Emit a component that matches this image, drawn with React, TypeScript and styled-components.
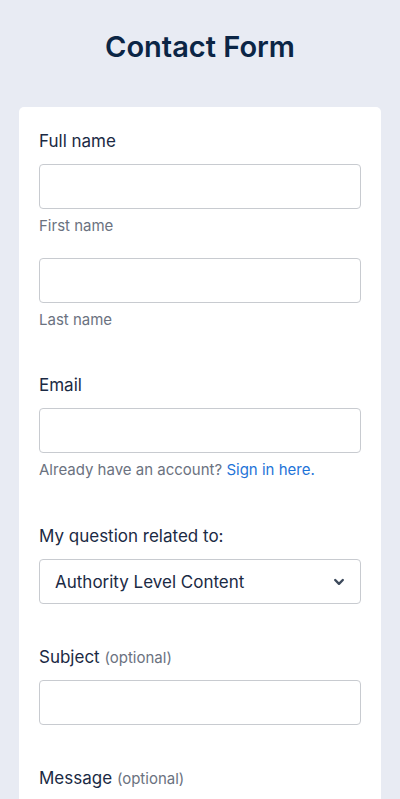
import React from "react";
import styled, { createGlobalStyle } from "styled-components";

const Global = createGlobalStyle`
  html, body { margin: 0; padding: 0; background: #e8ebf3; }
  body { font-family: Inter, "Noto Sans", "Liberation Sans", sans-serif; -webkit-font-smoothing: antialiased; }
  * { box-sizing: border-box; }
`;

const Page = styled.div`
  min-height: 799px;
  background: #e8ebf3;
  padding: 0 19px;
`;

const Title = styled.h1`
  margin: 0;
  padding: 28px 0 0;
  height: 107px;
  text-align: center;
  font-size: 29px;
  line-height: 38px;
  font-weight: 600;
  color: #0b2545;
`;

const Card = styled.div`
  background: #ffffff;
  border-radius: 5px 5px 0 0;
  padding: 22px 20px 40px;
  display: flex;
  flex-direction: column;
`;

const Field = styled.div<{ $gap?: number }>`
  display: flex;
  flex-direction: column;
  margin-bottom: ${(p) => p.$gap ?? 0}px;
`;

const Label = styled.label<{ $tight?: boolean }>`
  font-size: 17px;
  line-height: 24px;
  color: #1b2a44;
  margin-bottom: ${(p) => (p.$tight ? 10 : 11)}px;
`;

const Optional = styled.span`
  font-size: 15px;
  color: #6b7280;
`;

const Input = styled.div<{ $tall?: boolean }>`
  height: ${(p) => (p.$tall ? 120 : 45)}px;
  border: 1px solid #c8cbd0;
  border-radius: 4px;
  background: #fff;
`;

const Helper = styled.div<{ $after?: number }>`
  font-size: 15px;
  line-height: 20px;
  color: #6b7280;
  margin-top: 7px;
  margin-bottom: ${(p) => p.$after ?? 0}px;
`;

const Link = styled.a`
  color: #1f74d8;
  text-decoration: none;
`;

const Select = styled.div`
  height: 45px;
  border: 1px solid #c8cbd0;
  border-radius: 4px;
  display: flex;
  align-items: center;
  justify-content: space-between;
  padding: 0 15px 0 15px;
  font-size: 17px;
  color: #1b2a44;
`;

const Chevron = () => (
  <svg width="12" height="8" viewBox="0 0 12 8">
    <path d="M2.2 2 L6 5.8 L9.8 2" fill="none" stroke="#3d4a5c" strokeWidth="2.4" strokeLinecap="round" strokeLinejoin="round" />
  </svg>
);

export default function App() {
  return (
    <>
      <Global />
      <Page>
        <Title>Contact Form</Title>
        <Card>
          <Field $gap={43}>
            <Label>Full name</Label>
            <Input />
            <Helper $after={22}>First name</Helper>
            <Input />
            <Helper>Last name</Helper>
          </Field>
          <Field $gap={44}>
            <Label>Email</Label>
            <Input />
            <Helper>
              Already have an account? <Link href="#">Sign in here.</Link>
            </Helper>
          </Field>
          <Field $gap={41}>
            <Label>My question related to:</Label>
            <Select>
              <span>Authority Level Content</span>
              <Chevron />
            </Select>
          </Field>
          <Field $gap={41}>
            <Label $tight>
              Subject <Optional>(optional)</Optional>
            </Label>
            <Input />
          </Field>
          <Field>
            <Label>
              Message <Optional>(optional)</Optional>
            </Label>
            <Input $tall />
          </Field>
        </Card>
      </Page>
    </>
  );
}
